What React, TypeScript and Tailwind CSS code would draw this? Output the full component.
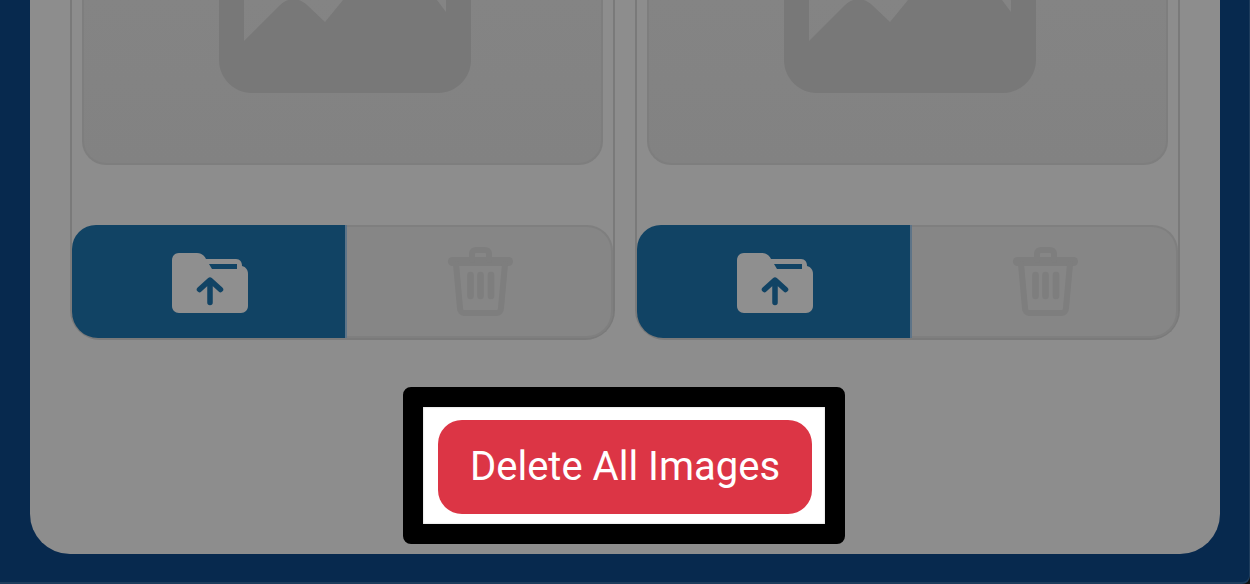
function ImageIcon() {
  return (
    <svg width="252" height="93" viewBox="219 0 252 93" className="block ml-[4px]">
      <path
        fillRule="evenodd"
        fill="#787878"
        d="M219 -40H471V60C471 78 456 93 438 93H252C234 93 219 78 219 60ZM244 -20V41L279 6C288 -3 298 -3 307 5L325 22L343 0L365 -20ZM420 -20L437 0L446 12V-20Z"
      />
    </svg>
  );
}

function FolderIcon() {
  return (
    <svg width="76" height="60" viewBox="172 253 76 60" className="block">
      <path
        fill="#8f8f8f"
        d="M179 253H197C201 253 204 255 206 259H236C240 259 242 262 242 266C246 267 248 270 248 274V306C248 310 245 313 241 313H179C175 313 172 310 172 306V260C172 256 175 253 179 253Z"
      />
      <path fill="#114364" d="M209 264H237V269H212Z" />
      <path
        fill="none"
        stroke="#114364"
        strokeWidth="5.5"
        strokeLinecap="round"
        strokeLinejoin="round"
        d="M210 302.5V281M199.5 289.5L210 280L220.5 289.5"
      />
    </svg>
  );
}

function TrashIcon() {
  return (
    <svg width="66" height="70" viewBox="447 247 66 70" className="block ml-[1px]">
      <g fill="none" stroke="#7e7e7e" strokeLinecap="round" strokeLinejoin="round">
        <path strokeWidth="9" d="M452.5 261.5H508.5" />
        <path strokeWidth="6" d="M472 260V254C472 251 474 250 476 250H485C487 250 489 251 489 254V260" />
        <path strokeWidth="6" d="M456 264L460 308C460 311 462 313 464 313H497C499 313 501 311 501 308L505 264" />
        <path strokeWidth="6.5" d="M470.5 275V296M480.5 275V296M491 275V296" />
      </g>
    </svg>
  );
}

function ImageCard() {
  return (
    <div className="flex-1 flex flex-col border-2 border-t-0 border-[#7a7a7a] rounded-b-[30px]">
      <div className="h-[225px] px-[10px]">
        <div className="h-[165px] border-2 border-t-0 border-[#7e7e7e] rounded-b-[24px] bg-gradient-to-b from-[#848484] to-[#828282] flex justify-center items-end pb-[70px]">
          <ImageIcon />
        </div>
      </div>
      <div className="h-[113px] flex">
        <div className="w-[275px] bg-[#114364] border-r-2 border-[#5d7488] rounded-tl-[24px] rounded-bl-[26px] flex items-center justify-center pt-[3px] pl-[3px]">
          <FolderIcon />
        </div>
        <div className="flex-1 bg-[#868686] border-t-2 border-r-2 border-b-2 border-[#7f7f7f] rounded-tr-[26px] rounded-br-[26px] flex items-center justify-center">
          <TrashIcon />
        </div>
      </div>
    </div>
  );
}

export default function App() {
  return (
    <div className="h-[584px] w-[1250px] bg-[#111111]">
      <main className="h-[584px] overflow-hidden bg-[#07294e] border-b-2 border-r border-[#1d3c5c] rounded-br-[8px] flex flex-col justify-end pl-[30px] pr-[29px] pb-[28px]">
        <div className="h-[554px] bg-[#8d8d8d] rounded-b-[40px] flex flex-col items-center pb-[10px]">
          <div className="w-[1110px] flex gap-[20px] flex-1">
            <ImageCard />
            <ImageCard />
          </div>
          <div className="mt-[47px] mr-[2px] bg-white shadow-[inset_0_0_2px_#bbbbbb] border-[20px] border-black rounded-[8px] w-[442px] h-[157px] pt-[13px] pl-[15px]">
            <button className="block w-[374px] h-[94px] bg-[#dc3545] rounded-[24px] text-white text-[40px] font-['Roboto',sans-serif]">
              Delete All Images
            </button>
          </div>
        </div>
      </main>
    </div>
  );
}
